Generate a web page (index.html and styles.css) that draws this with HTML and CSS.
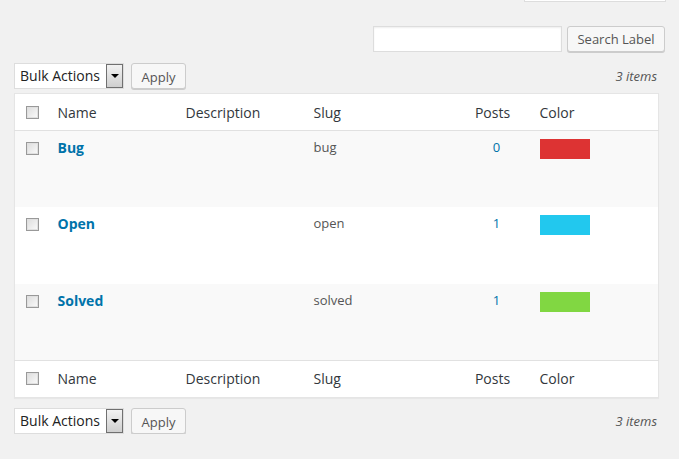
FILE: index.html
```html
<!DOCTYPE html>
<html>
<head>
<meta charset="utf-8">
<link rel="stylesheet" href="styles.css">
</head>
<body>
<div class="screen-tab"></div>
<div class="search-row">
  <div class="search-input"></div>
  <div class="btn search-btn">Search Label</div>
</div>
<div class="tablenav top">
  <div class="bulk">
    <div class="select"><span class="select-text">Bulk Actions</span><span class="select-arrow"><span class="tri"></span></span></div>
    <div class="btn apply">Apply</div>
  </div>
  <div class="count">3 items</div>
</div>
<table class="list">
  <colgroup>
    <col class="c-cb"><col class="c-name"><col class="c-desc"><col class="c-slug"><col class="c-posts"><col class="c-color">
  </colgroup>
  <thead>
    <tr><th class="cb"><span class="check"></span></th><th>Name</th><th>Description</th><th>Slug</th><th class="posts">Posts</th><th>Color</th></tr>
  </thead>
  <tbody>
    <tr class="alt"><td class="cb"><span class="check"></span></td><td><a class="title">Bug</a></td><td></td><td class="slug">bug</td><td class="posts"><a class="num">0</a></td><td><span class="swatch red"></span></td></tr>
    <tr><td class="cb"><span class="check"></span></td><td><a class="title">Open</a></td><td></td><td class="slug">open</td><td class="posts"><a class="num">1</a></td><td><span class="swatch cyan"></span></td></tr>
    <tr class="alt"><td class="cb"><span class="check"></span></td><td><a class="title">Solved</a></td><td></td><td class="slug">solved</td><td class="posts"><a class="num">1</a></td><td><span class="swatch green"></span></td></tr>
  </tbody>
  <tfoot>
    <tr><th class="cb"><span class="check"></span></th><th>Name</th><th>Description</th><th>Slug</th><th class="posts">Posts</th><th>Color</th></tr>
  </tfoot>
</table>
<div class="tablenav bottom">
  <div class="bulk">
    <div class="select"><span class="select-text">Bulk Actions</span><span class="select-arrow"><span class="tri"></span></span></div>
    <div class="btn apply">Apply</div>
  </div>
  <div class="count">3 items</div>
</div>
</body>
</html>
```

FILE: styles.css
```css
html, body {
  margin: 0;
  padding: 0;
  background: #f1f1f1;
  font-family: "Open Sans", "Liberation Sans", sans-serif;
  color: #32373c;
}
body {
  padding: 0 14px;
}
.screen-tab {
  width: 140px;
  height: 1px;
  margin-left: auto;
  margin-right: -1px;
  background: #fff;
  border: 1px solid #ddd;
  border-top: none;
}
.search-row {
  display: flex;
  justify-content: flex-end;
  gap: 5px;
  margin-top: 24px;
}
.search-input {
  width: 187px;
  height: 24px;
  background: #fff;
  border: 1px solid #ddd;
  box-shadow: inset 0 1px 2px rgba(0,0,0,.07);
}
.btn {
  box-sizing: border-box;
  height: 26px;
  background: #f7f7f7;
  border: 1px solid #ccc;
  border-radius: 3px;
  box-shadow: 0 1px 0 #ccc;
  color: #555;
  font-size: 13px;
  line-height: 24px;
  text-align: center;
}
.search-btn {
  width: 98px;
}
.tablenav {
  width: 644px;
  display: flex;
  justify-content: space-between;
  align-items: center;
}
.tablenav.top {
  margin-top: 11px;
  margin-bottom: 4px;
}
.tablenav.bottom {
  margin-top: 10px;
}
.bulk {
  display: flex;
  gap: 7px;
}
.select {
  box-sizing: border-box;
  width: 110px;
  height: 26px;
  background: #fff;
  border: 1px solid #ddd;
  display: flex;
  align-items: stretch;
  justify-content: space-between;
}
.select-text {
  font-size: 14px;
  line-height: 24px;
  padding-left: 5px;
  color: #222;
}
.select-arrow {
  box-sizing: border-box;
  width: 17px;
  border: 1px solid #707070;
  background: linear-gradient(#f2f2f2, #cfcfcf);
  display: flex;
  align-items: center;
  justify-content: center;
}
.tri {
  width: 0;
  height: 0;
  border-left: 4px solid transparent;
  border-right: 4px solid transparent;
  border-top: 4px solid #000;
}
.apply {
  width: 55px;
  line-height: 26px;
}
.count {
  font-size: 13px;
  font-style: italic;
  color: #555;
  padding-right: 1px;
}
.list {
  width: 644px;
  table-layout: fixed;
  border-collapse: collapse;
  border-spacing: 0;
  background: #fff;
  border: 1px solid #e5e5e5;
  box-shadow: 0 1px 1px rgba(0,0,0,.04);
}
.c-cb { width: 33px; }
.c-name { width: 128px; }
.c-desc { width: 128px; }
.c-slug { width: 152px; }
.c-posts { width: 74px; }
.c-color { width: 129px; }
th {
  font-weight: 400;
  font-size: 14px;
  text-align: left;
  padding: 0 10px;
  height: 36px;
  color: #32373c;
}
thead th {
  border-bottom: 1px solid #e1e1e1;
}
tfoot th {
  border-top: 1px solid #e1e1e1;
}
td {
  vertical-align: top;
  padding: 7px 10px 9px;
  font-size: 13px;
  line-height: 19px;
  height: 60.33px;
  box-sizing: content-box;
}
tr.alt td {
  background: #f9f9f9;
}
th.cb, td.cb {
  padding: 0 0 0 11px;
}
td.cb {
  padding-top: 11px;
}
.check {
  display: block;
  box-sizing: border-box;
  width: 13px;
  height: 13px;
  border: 1px solid #999;
  box-shadow: inset 0 0 0 1px #e0e0e0;
  background: linear-gradient(135deg, #dcdcdc, #fbfbfb);
}
.title {
  color: #0073aa;
  font-weight: 700;
  font-size: 14px;
}
.slug {
  color: #555;
}
.posts {
  text-align: center;
}
td.posts {
  padding-left: 14px;
  padding-right: 6px;
}
.num {
  color: #0073aa;
}
.swatch {
  display: block;
  width: 50px;
  height: 20px;
  margin-top: 1px;
}
.red { background: #dd3333; }
.cyan { background: #22c8ee; }
.green { background: #81d742; }
```
